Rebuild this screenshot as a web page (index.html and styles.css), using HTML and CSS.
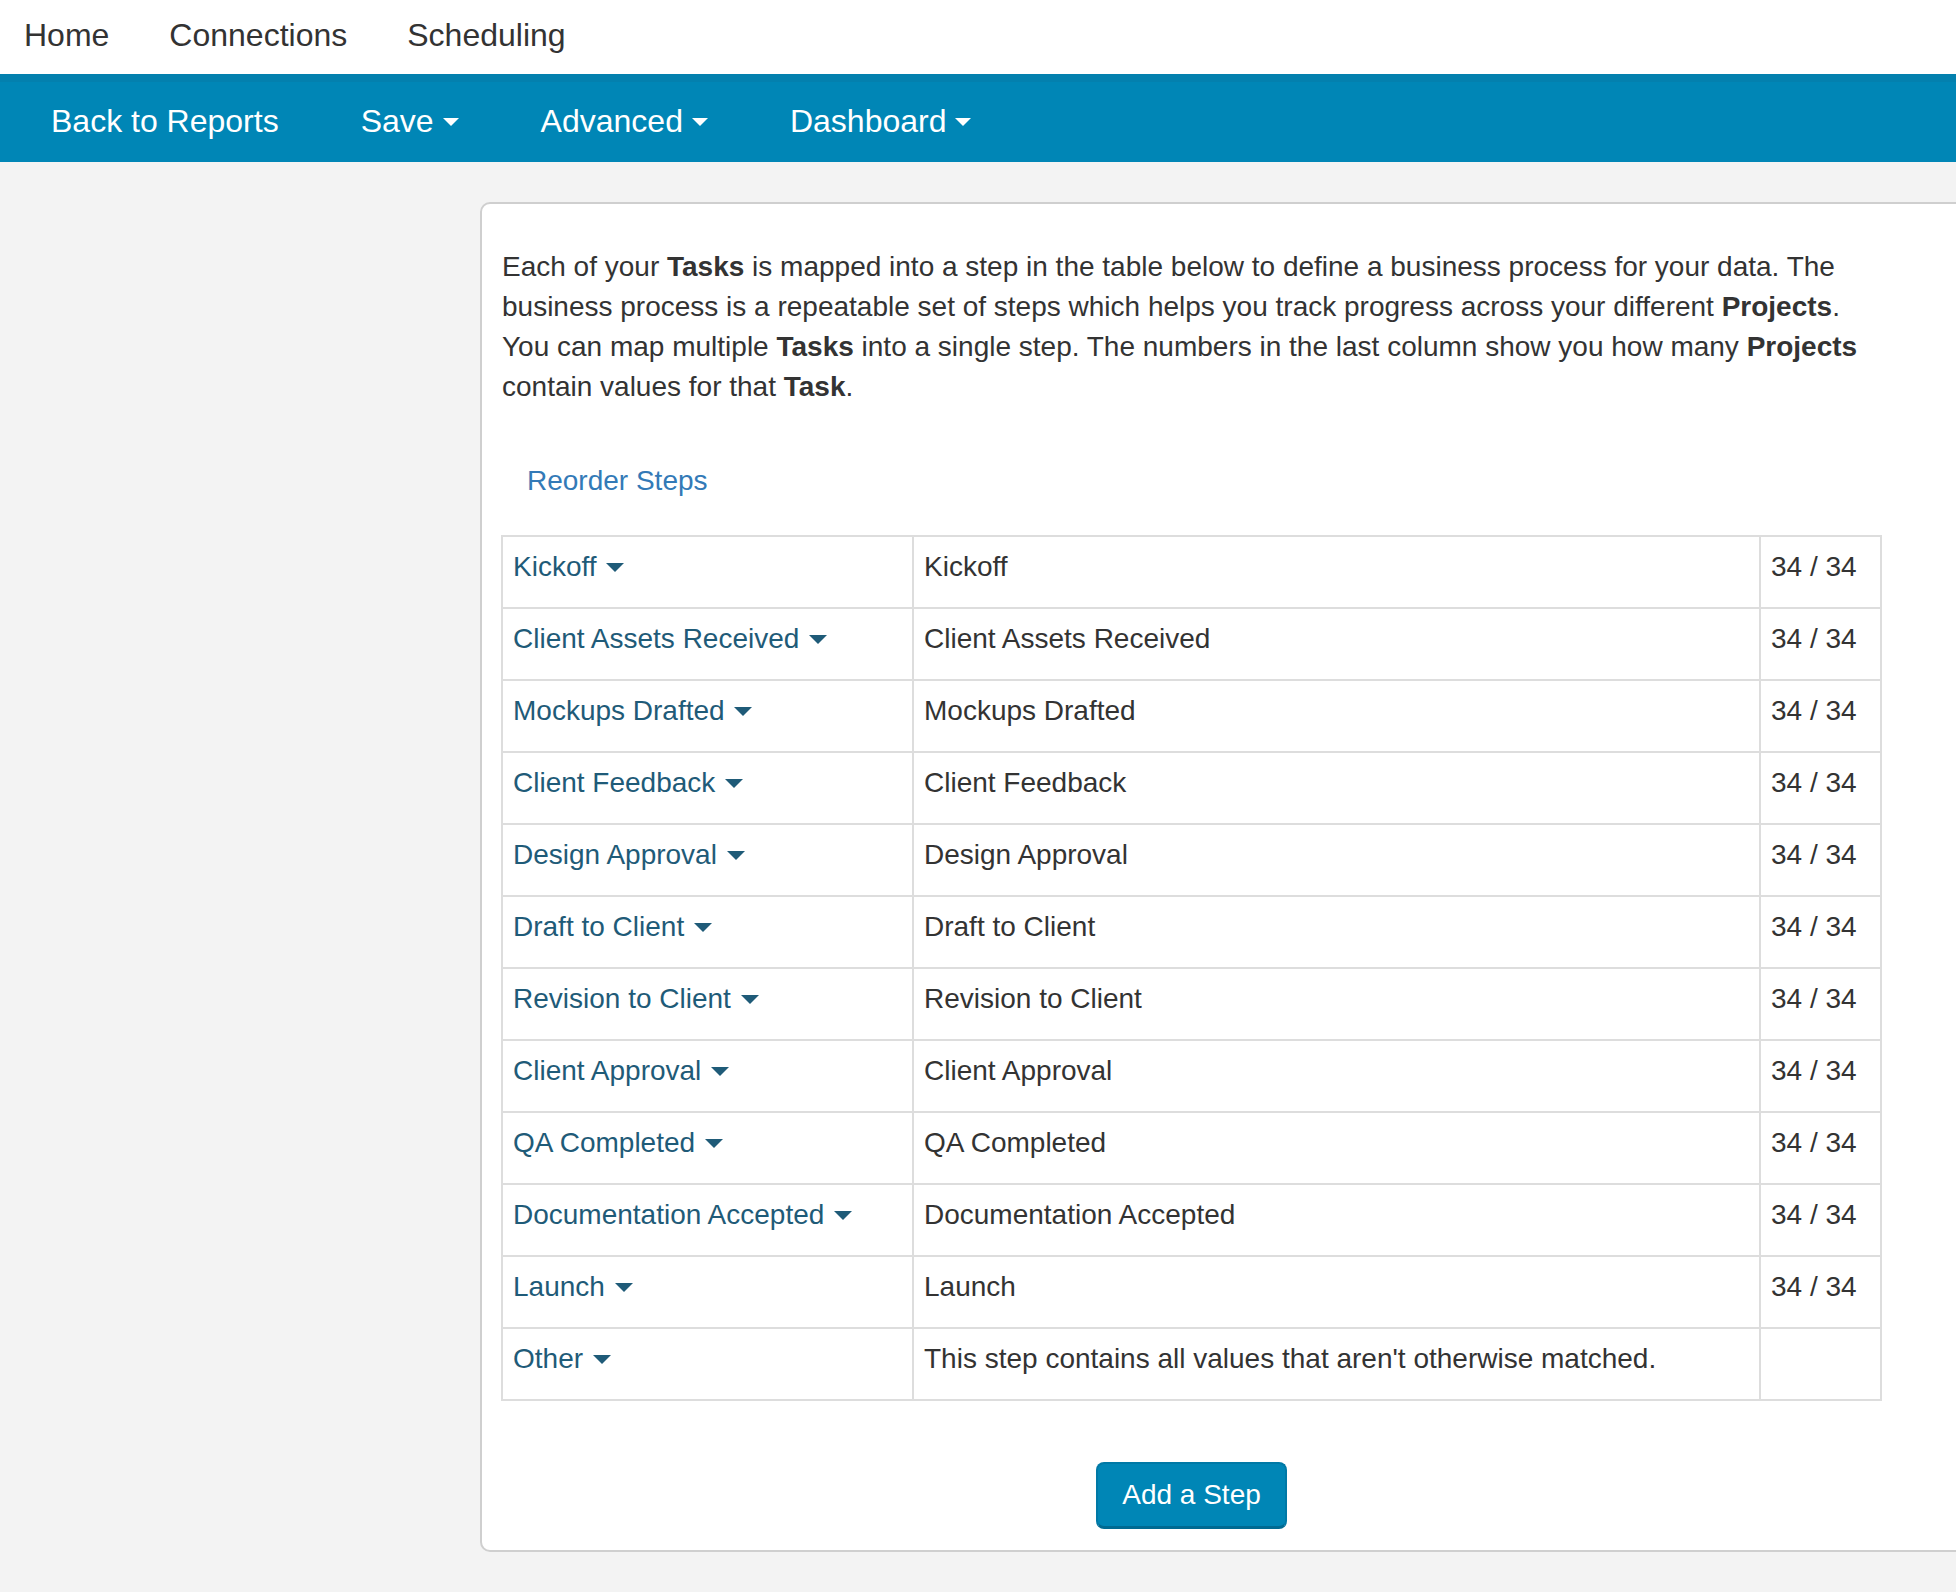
FILE: index.html
```html
<!DOCTYPE html>
<html>
<head>
<meta charset="utf-8">
<title>Business Process</title>
<link rel="stylesheet" href="styles.css">
</head>
<body>
<nav class="topnav">
  <a class="topnav-link">Home</a>
  <a class="topnav-link">Connections</a>
  <a class="topnav-link">Scheduling</a>
</nav>
<nav class="toolbar">
  <a class="toolbar-link">Back to Reports</a>
  <a class="toolbar-link">Save <span class="caret caret-white"></span></a>
  <a class="toolbar-link">Advanced <span class="caret caret-white"></span></a>
  <a class="toolbar-link">Dashboard <span class="caret caret-white"></span></a>
</nav>
<main class="main">
  <aside class="sidebar"></aside>
  <section class="card">
    <p class="intro">Each of your <b>Tasks</b> is mapped into a step in the table below to define a business process for your data. The business process is a repeatable set of steps which helps you track progress across your different <b>Projects</b>. You can map multiple <b>Tasks</b> into a single step. The numbers in the last column show you how many <b>Projects</b> contain values for that <b>Task</b>.</p>
    <div class="reorder"><a class="reorder-link">Reorder Steps</a></div>
    <table class="steps">
      <colgroup><col class="c1"><col class="c2"><col class="c3"></colgroup>
      <tbody>
        <tr><td><a class="step-link">Kickoff <span class="caret caret-teal"></span></a></td><td>Kickoff</td><td>34 / 34</td></tr>
        <tr><td><a class="step-link">Client Assets Received <span class="caret caret-teal"></span></a></td><td>Client Assets Received</td><td>34 / 34</td></tr>
        <tr><td><a class="step-link">Mockups Drafted <span class="caret caret-teal"></span></a></td><td>Mockups Drafted</td><td>34 / 34</td></tr>
        <tr><td><a class="step-link">Client Feedback <span class="caret caret-teal"></span></a></td><td>Client Feedback</td><td>34 / 34</td></tr>
        <tr><td><a class="step-link">Design Approval <span class="caret caret-teal"></span></a></td><td>Design Approval</td><td>34 / 34</td></tr>
        <tr><td><a class="step-link">Draft to Client <span class="caret caret-teal"></span></a></td><td>Draft to Client</td><td>34 / 34</td></tr>
        <tr><td><a class="step-link">Revision to Client <span class="caret caret-teal"></span></a></td><td>Revision to Client</td><td>34 / 34</td></tr>
        <tr><td><a class="step-link">Client Approval <span class="caret caret-teal"></span></a></td><td>Client Approval</td><td>34 / 34</td></tr>
        <tr><td><a class="step-link">QA Completed <span class="caret caret-teal"></span></a></td><td>QA Completed</td><td>34 / 34</td></tr>
        <tr><td><a class="step-link">Documentation Accepted <span class="caret caret-teal"></span></a></td><td>Documentation Accepted</td><td>34 / 34</td></tr>
        <tr><td><a class="step-link">Launch <span class="caret caret-teal"></span></a></td><td>Launch</td><td>34 / 34</td></tr>
        <tr><td><a class="step-link">Other <span class="caret caret-teal"></span></a></td><td>This step contains all values that aren't otherwise matched.</td><td></td></tr>
      </tbody>
    </table>
    <div class="actions"><button class="btn-add">Add a Step</button></div>
  </section>
</main>
</body>
</html>
```

FILE: styles.css
```css
* { box-sizing: border-box; }
html, body {
  margin: 0;
  padding: 0;
  height: 100%;
}
body {
  font-family: "Liberation Sans", Arial, Helvetica, sans-serif;
  font-size: 28px;
  line-height: 40px;
  color: #333;
  background: #f3f3f3;
  overflow: hidden;
}
a { cursor: pointer; }

.topnav {
  height: 74px;
  background: #fff;
  display: flex;
  align-items: center;
  padding: 0 0 4px 24px;
  gap: 60px;
}
.topnav-link {
  font-size: 32px;
  color: #333;
  line-height: 40px;
}

.toolbar {
  height: 88px;
  background: #0086b6;
  border-top: 8px solid #0380ae;
  display: flex;
  align-items: center;
  padding: 0 0 3px 51px;
  gap: 82px;
}
.toolbar-link {
  font-size: 32px;
  color: #fff;
  line-height: 40px;
  display: flex;
  align-items: center;
  gap: 9px;
}

.caret {
  display: inline-block;
  width: 0;
  height: 0;
  border-left: 8px solid transparent;
  border-right: 8px solid transparent;
  border-top: 8px solid currentColor;
}
.caret-white { color: #fff; margin-top: 2px; }
.caret-teal {
  color: #1f5b78;
  border-left-width: 9px;
  border-right-width: 9px;
  border-top-width: 9px;
  vertical-align: middle;
  margin-left: 2px;
  margin-top: -2px;
}

.main {
  display: flex;
  padding-top: 40px;
  background: #f3f3f3;
}
.sidebar {
  flex: 0 0 480px;
}
.card {
  flex: 0 0 1560px;
  background: #fff;
  border: 2px solid #cfcfcf;
  border-radius: 10px;
  padding: 43px 20px 21px 20px;
}
.intro {
  width: 1380px;
  margin: 0;
}
.reorder {
  margin-top: 54px;
  padding-left: 25px;
}
.reorder-link {
  color: #337ab7;
}

.steps {
  margin-top: 34px;
  width: 1379px;
  border-collapse: collapse;
  table-layout: fixed;
  border: 2px solid #ddd;
  margin-left: -1px;
}
.steps .c1 { width: 411px; }
.steps .c2 { width: 847px; }
.steps .c3 { width: 121px; }
.steps td {
  border: 2px solid #ddd;
  height: 72px;
  padding: 10px 10px 20px 10px;
  vertical-align: top;
  white-space: nowrap;
}
.step-link {
  color: #1f5b78;
}

.actions {
  display: flex;
  justify-content: center;
  margin-top: 61px;
  width: 1379px;
}
.btn-add {
  font-family: inherit;
  font-size: 28px;
  line-height: 40px;
  color: #fff;
  background: #0086b6;
  border: 2px solid #0079a6;
  border-bottom: 3px solid #006a92;
  border-radius: 8px;
  width: 191px;
  height: 67px;
  padding: 0;
}
```
